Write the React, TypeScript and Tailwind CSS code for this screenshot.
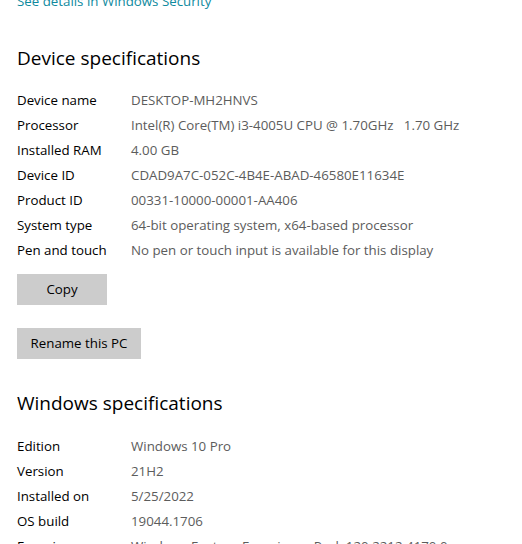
const deviceSpecs: [string, string][] = [
  ["Device name", "DESKTOP-MH2HNVS"],
  ["Processor", "Intel(R) Core(TM) i3-4005U CPU @ 1.70GHz   1.70 GHz"],
  ["Installed RAM", "4.00 GB"],
  ["Device ID", "CDAD9A7C-052C-4B4E-ABAD-46580E11634E"],
  ["Product ID", "00331-10000-00001-AA406"],
  ["System type", "64-bit operating system, x64-based processor"],
  ["Pen and touch", "No pen or touch input is available for this display"],
];

const windowsSpecs: [string, string][] = [
  ["Edition", "Windows 10 Pro"],
  ["Version", "21H2"],
  ["Installed on", "5/25/2022"],
  ["OS build", "19044.1706"],
  ["Experience", "Windows Feature Experience Pack 120.2212.4170.0"],
];

function SpecRows({ rows }: { rows: [string, string][] }) {
  return (
    <div className="flex flex-col">
      {rows.map(([label, value]) => (
        <div key={label} className="flex h-[25px] items-center text-[13.3px] leading-[20px]">
          <span className="w-[114px] shrink-0 text-black">{label}</span>
          <span className="whitespace-pre text-[#5c5c5c]">{value}</span>
        </div>
      ))}
    </div>
  );
}

export default function App() {
  return (
    <div
      className="h-[544px] w-[522px] overflow-hidden bg-white pl-[17px]"
      style={{ fontFamily: '"Open Sans", "Noto Sans", sans-serif' }}
    >
      <div className="-mt-[9px] text-[13.3px] leading-[20px] text-[#0f8a9e]">
        See details in Windows Security
      </div>

      <h2 className="mt-[33px] text-[19px] leading-[28px] text-black">Device specifications</h2>

      <div className="mt-[15px]">
        <SpecRows rows={deviceSpecs} />
      </div>

      <div className="mt-[12px] flex flex-col items-start gap-[23px]">
        <button className="h-[31px] w-[90px] bg-[#cccccc] text-[13.3px] text-black">Copy</button>
        <button className="h-[31px] w-[124px] bg-[#cccccc] text-[13.3px] text-black">Rename this PC</button>
      </div>

      <h2 className="mt-[30px] text-[19px] leading-[28px] text-black">Windows specifications</h2>

      <div className="mt-[16px]">
        <SpecRows rows={windowsSpecs} />
      </div>
    </div>
  );
}
